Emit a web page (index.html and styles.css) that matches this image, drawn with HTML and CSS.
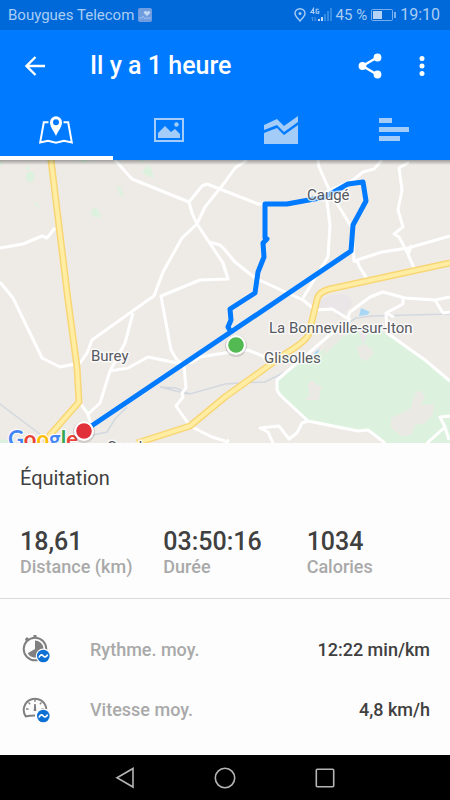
FILE: index.html
```html
<!DOCTYPE html>
<html lang="fr">
<head>
<meta charset="utf-8">
<meta name="viewport" content="width=device-width, initial-scale=1">
<title>Il y a 1 heure</title>
<link rel="stylesheet" href="styles.css">
</head>
<body>
<div class="status">
  <div class="status-side">
    <span>Bouygues Telecom</span>
    <svg class="app-badge" width="14" height="14" viewBox="0 0 14 14" aria-hidden="true">
      <rect width="14" height="14" rx="2" fill="#6f9de0"/>
      <path d="M9 8 6 5.300C5 3.500 7.500 2 9 3.800 10.500 2 13 3.500 12 5.300z" fill="#c0d8f5"/>
      <path d="M1 10h3l1-2 2 3 1-1h5" fill="none" stroke="#9dbdec"/>
    </svg>
  </div>
  <div class="status-side">
    <svg width="12" height="14" viewBox="0 0 12 14" aria-hidden="true">
      <path d="M6 13C3.500 10 1 8 1 5.500a5 4.800 0 0 1 10 0C11 8 8.500 10 6 13z" fill="none" stroke="#a9cdf4" stroke-width="1.400"/>
      <circle cx="6" cy="5.600" r="1.500" fill="#a9cdf4"/>
    </svg>
    <svg width="22" height="16" viewBox="0 0 22 16" aria-hidden="true">
      <path d="M3.500 7V1.500L.8 5.500H4.500M8.800 2.200H6.200v4h2.600V4.500H7.500" fill="none" stroke="#a9cdf4" stroke-width="1.100"/>
      <path d="M2.500 14v-4l-1.500 1.500M5 10v4l1.500-1.500" fill="none" stroke="#4a93e2"/>
      <path d="M8 12h2v2H8zM11 10h2v4h-2z" fill="#c4ddf8"/>
      <path d="M14 7h2v7h-2zM17 4h2v10h-2zM20 1h2v13h-2z" fill="#348be3"/>
    </svg>
    <span class="battery-text">45 %</span>
    <svg width="25" height="12" viewBox="0 0 25 12" aria-hidden="true">
      <rect x=".5" y=".5" width="21" height="11" rx="1" fill="none" stroke="#78b0ee"/>
      <path d="M2 2h9v8H2z" fill="#b4d3f5"/><path d="M23 3h2v6h-2z" fill="#78b0ee"/>
    </svg>
    <span class="clock">19:10</span>
  </div>
</div>

<header class="appbar">
  <button class="icon-button" aria-label="Retour">
    <svg width="20" height="20" viewBox="0 0 20 20"><path d="M20 10H2M10.500 1 1.500 10l9 9" fill="none" stroke="#fff" stroke-width="2.400"/></svg>
  </button>
  <h1>Il y a 1 heure</h1>
  <button class="icon-button" aria-label="Partager">
    <svg width="24" height="26" viewBox="0 0 24 26"><path d="M19 4.500 4.500 13 19 21.500" fill="none" stroke="#fff" stroke-width="2.400"/><g fill="#fff"><circle cx="19.500" cy="4.500" r="3.900"/><circle cx="4.500" cy="13" r="3.900"/><circle cx="19.500" cy="21.500" r="3.900"/></g></svg>
  </button>
  <button class="icon-button menu-button" aria-label="Plus">
    <svg width="6" height="20" viewBox="0 0 6 20" fill="#fff"><circle cx="3" cy="2.500" r="2.500"/><circle cx="3" cy="10" r="2.500"/><circle cx="3" cy="17.500" r="2.500"/></svg>
  </button>
</header>

<nav class="tabs">
  <button class="tab active" aria-label="Carte">
    <svg width="34" height="28" viewBox="0 0 34 28"><path d="M9.500 6.200H4.800L1.200 26.400 9 24.800l8 2 8-2 7.800 1.600L29.200 6.200h-4.700" fill="none" stroke="#fff" stroke-width="2"/><path fill-rule="evenodd" d="M17 20C15 15 11 11 11 6.400a6 6.200 0 0 1 12 0C23 11 19 15 17 20zM17 3.300a3 3 0 1 0 0 6 3 3 0 0 0 0-6z" fill="#fff"/></svg>
  </button>
  <button class="tab" aria-label="Photos">
    <svg width="30" height="24" viewBox="0 0 30 24"><path d="M1 1h28v22H1z" fill="none" stroke="#a3cdf8" stroke-width="2"/><path d="M4 20v-5l7-7 6 6 4-3 5 5v4z" fill="#a3cdf8"/><circle cx="22.500" cy="6.500" r="2.200" fill="#a3cdf8"/></svg>
  </button>
  <button class="tab" aria-label="Graphiques">
    <svg width="34" height="28" viewBox="0 0 34 28" fill="#a3cdf8"><path d="M0 9 13 3l7 7L34 0v6L20 16l-7-7-13 5z"/><path d="m0 17 13-5 7 7L34 9v19H0z"/></svg>
  </button>
  <button class="tab" aria-label="Détails">
    <svg width="30" height="24" viewBox="0 0 30 24" fill="#a3cdf8"><path d="M0 0h13v5H0zM0 9h30v5H0zM0 18h21v5H0z"/></svg>
  </button>
</nav>

<main>
  <section class="map" aria-label="Carte du parcours">
    <svg viewBox="0 160 450 283" preserveAspectRatio="xMidYMid slice">
      <rect x="0" y="160" width="450" height="283" fill="#eeebe7"/>
      <path class="wood" d="M357 331 378 331 387 333 425 360 450 381V443H385L368 431 358 431 308 421 280 395 277 390V380L297 363 320 352 334 340 345 336 349 330z"/>
      <path class="wood" d="m26 174 4-3 4 2v7l-4 3-4-3zM25 168l3-2 2 3-2 1zM34 204l4-1 1 5zM91 210l5-2 3 3 2 7-9-2zM142 172l6-7 3 3 3 10-8-3zM116 185l5 3 3 10-4-3zM77 160h12l-5 3zM0 161l2 1-2 5zM86 406l4 5-3 1zM0 439l8 1 3 3H0zM138 160h6l-2 2z"/>
      <path class="bare" d="m357 346 9-2 8 8-7 9-7-3zM308 384l4-4 4 4 6 3-2 5-1 8h-14l4-4v-5zM391 418l10-5 10-5 2-8 3-8 5-1 4 6-4 8 13-1-1 10-8 9-10 2-4 10-10 1-10-8zM327 339l10-5 6 1-6 8-10 9-4 4z"/>
      <path d="m318 302 12-7 15-1 6 4 1 7-13 13-8-9-16 2z" fill="#eae6e8"/>
      <path d="m358 330 5 14 6-13-5-5z" fill="#e9e5e8"/>
      <path class="lake" d="m361 308 9 4-3 3-8 1zM362 302l6-5-2 4zM315 352l5-3-4 7-4 3z"/>
      <path class="river" d="M0 404 41 435M160 387l16 1 14 6 35-10 15-1 25-1 24-12 8-7 35-30 24-15 16-2 78-2M160 387l28 7M127 407l-12 12-8 13-14 3"/>
      <g class="road">
        <path d="m115 160 17 19 57 23 3 11 5 11 12 18 14 21 2 7"/>
        <path d="m209 242 11 3 5 5 10 12 20 16 48 22 12 10 17-1 18 11"/>
        <path d="m189 202 13-16 5-2 18 7 33 13h7"/>
        <path d="m247 160-12 8-10 14-20 25-8 17-15 14-19 34-9 24-6 4-56 40-5 13-7 10-20 4-18-9-29-60-13-16"/>
        <path d="m0 248 23-4 19-8 5 2 8-10"/>
        <path d="m223 263 5 16-28 1-39 16 2 11 8 43 6 10 7 5 2 23-4 5 1 4-7 9 14 20 22 11 13 4"/>
        <path d="m110 371 18-3 20-11 29 6 16-1 7-5 25-4 23-3 17 7"/>
        <path d="m133 313-8 30-15 28-10 32-12 11-8-11 8 11 3 11"/>
        <path d="m318 160 1 7 9 20 10 18 14 23 2 33 4 1 1 4 10 16"/>
        <path d="m382 160-8 9-11 3-10 8-25 11-1 11 3 23-2 32-5 8-20 33"/>
        <path d="m354 261 28-9 26-4 42-12"/>
        <path d="m409 162-10 6 3 22-4 20 5 17-9 7 5 3 8 15 7 16M412 245l-4 9"/>
        <path d="m348 317 2-5 20-15 13-5 22 6 30 2 15-3M350 320l-2-3 2-5M403 297v7l-17 9 1 20 38 27 25 21M386 313l8 4M435 300l8 13 7-1"/>
        <path d="m350 320-18 13-35 30-20 17v10l3 5 28 26 50 10 10-1 17 13"/>
        <path d="m308 421-6 2-5 10-8 6-10-13-19 2 8 4 5 11M427 443l18-16-5-10 10-1M445 427l4 13M225 443l4-3"/>
      </g>
      <path class="highway-edge" d="m51 160 17 140 9 67 2 35-29 33-4 8"/>
      <path class="highway" d="m51 160 17 140 9 67 2 35-29 33-4 8"/>
      <path class="highway-edge" d="m450 263-120 26q-12 3-13 11l-8 33q-1 7-24 21l-60 43-35 29-53 17"/>
      <path class="highway" d="m450 263-120 26q-12 3-13 11l-8 33q-1 7-24 21l-60 43-35 29-53 17"/>
      <text class="place" x="107" y="452">Gaud</text>
      <text class="google" x="8" y="447"><tspan fill="#4285f4">G</tspan><tspan fill="#ea4335">o</tspan><tspan fill="#fbbc05">o</tspan><tspan fill="#4285f4">g</tspan><tspan fill="#34a853">l</tspan><tspan fill="#ea4335">e</tspan></text>
      <path class="track" d="M84 431 351 251 353 225 366 201 363 182 348 184 325 197 287 204 265 204V238L267 239 263 243 264 257 258 272 255 293 230 309 231 320 228 327 232 334"/>
      <circle class="halo" cx="236" cy="346" r="11"/><circle cx="236" cy="345" r="10" fill="#fff"/><circle cx="236" cy="345" r="7.800" fill="#53b951"/>
      <circle class="halo" cx="84" cy="432" r="11"/><circle cx="84" cy="431" r="10" fill="#fff"/><circle cx="84" cy="431" r="7.800" fill="#e2303a"/>
      <text class="place" x="307" y="200">Caugé</text>
      <text class="place" x="91" y="361">Burey</text>
      <text class="place" x="269" y="333">La Bonneville-sur-Iton</text>
      <text class="place" x="264" y="363">Glisolles</text>
    </svg>
  </section>

  <section class="summary">
    <h2>Équitation</h2>
    <dl class="stats">
      <div><dd>18,61</dd><dt>Distance (km)</dt></div>
      <div><dd>03:50:16</dd><dt>Durée</dt></div>
      <div><dd>1034</dd><dt>Calories</dt></div>
    </dl>
  </section>

  <dl class="details">
    <div class="detail">
      <svg width="30" height="30" viewBox="0 0 30 30" aria-hidden="true">
        <circle cx="13" cy="15" r="11.300" fill="none" stroke="#808080" stroke-width="2"/>
        <path d="M11.500 1h3v3h-3zM3 5l2-2 2 2-3 3z" fill="#808080"/>
        <path d="M13 15V6.500A8.500 8.500 0 1 1 5.600 19.200z" fill="#808080"/>
        <circle cx="21.300" cy="22" r="7.500" fill="#fdfdfd"/><circle cx="21.300" cy="22" r="6.300" fill="#0b6fd3"/>
        <path d="M17 23.500c1.500-3.500 3-3 4.300-1.500s3 1.500 4.300-1.500" fill="none" stroke="#fff" stroke-width="1.700"/>
      </svg>
      <dt>Rythme. moy.</dt><dd>12:22 min/km</dd>
    </div>
    <div class="detail">
      <svg width="30" height="30" viewBox="0 0 30 30" aria-hidden="true">
        <path d="M4 22.800A11.300 11.300 0 1 1 24.300 15M3 22.500q5-1 10-1" fill="none" stroke="#808080" stroke-width="2"/>
        <path d="M13 5v3M4 15h2.500M22 15h-2.500M6.500 8.500l1.700 1.700M19.500 8.500l-1.700 1.700" stroke="#808080" stroke-width="1.300"/>
        <path d="M12.200 10h1.600l.5 7h-2.600z" fill="#808080"/>
        <circle cx="21.300" cy="22" r="7.500" fill="#fdfdfd"/><circle cx="21.300" cy="22" r="6.300" fill="#0b6fd3"/>
        <path d="M17 23.500c1.500-3.500 3-3 4.300-1.500s3 1.500 4.300-1.500" fill="none" stroke="#fff" stroke-width="1.700"/>
      </svg>
      <dt>Vitesse moy.</dt><dd>4,8 km/h</dd>
    </div>
  </dl>
</main>

<nav class="system">
  <button aria-label="Précédent"><svg width="20" height="22" viewBox="0 0 20 22"><path d="M18 1.500v18.500L2 10.800z"/></svg></button>
  <button aria-label="Accueil"><svg width="22" height="22" viewBox="0 0 22 22"><circle cx="11" cy="11" r="9.700"/></svg></button>
  <button aria-label="Récents"><svg width="20" height="20" viewBox="0 0 20 20"><rect x="1.300" y="1.300" width="17.400" height="17.400" rx="1"/></svg></button>
</nav>
</body>
</html>
```
FILE: styles.css
```css
* { box-sizing: border-box; }

body {
  margin: 0;
  min-height: 100vh;
  display: flex;
  flex-direction: column;
  background: #fdfdfd;
  color: #404040;
  font-family: Roboto, "Liberation Sans", sans-serif;
}

h1, h2, dl, dt, dd { margin: 0; }
svg { display: block; flex: none; }
button {
  display: flex;
  align-items: center;
  justify-content: center;
  padding: 0;
  border: 0;
  background: none;
}

.status {
  display: flex;
  justify-content: space-between;
  padding: 0 10px 0 8px;
  background: #0069d9;
  color: #a9cdf4;
  font-size: 15px;
  line-height: 30px;
}
.status-side { display: flex; align-items: center; gap: 4px; }
.clock { font-size: 16px; }

.appbar {
  display: flex;
  align-items: center;
  height: 72px;
  padding: 0 20px 0 15px;
  background: #007aff;
  color: #fff;
}
.appbar h1 {
  flex: 1;
  padding-left: 35px;
  font-size: 25px;
  line-height: 32px;
  font-weight: 500;
}
.icon-button { width: 40px; height: 40px; }
.menu-button { width: 16px; margin-left: 24px; }

.tabs {
  display: grid;
  grid-template-columns: repeat(4, 1fr);
  height: 58px;
  background: #007aff;
}
.tab { border-bottom: 4px solid transparent; padding-top: 2px; }
.tab.active { border-bottom-color: #fff; }

main { flex: 1; display: flex; flex-direction: column; }

.map {
  position: relative;
  flex: 1 0 200px;
}
.map svg {
  position: absolute;
  inset: 0;
  width: 100%;
  height: 100%;
}
.map::after {
  content: "";
  position: absolute;
  inset: 0 0 auto;
  height: 5px;
  background: linear-gradient(#0005, #0000);
}
.wood { fill: #ddf2de; }
.bare { fill: #ebe9e3; }
.lake { fill: #a8d8f5; }
.river { fill: none; stroke: #d3d8df; stroke-width: 1.5px; }
.road { fill: none; stroke: #fff; stroke-width: 3px; stroke-linejoin: round; }
.highway-edge { fill: none; stroke: #f8d675; stroke-width: 7px; stroke-linejoin: round; }
.highway { fill: none; stroke: #ffeda3; stroke-width: 4px; stroke-linejoin: round; }
.track { fill: none; stroke: #007aff; stroke-width: 5px; stroke-linejoin: round; }
.halo { fill: #0002; }
.place {
  fill: #565a61;
  stroke: #fffb;
  stroke-width: 3px;
  stroke-linejoin: round;
  paint-order: stroke;
  font-size: 15px;
}
.google {
  stroke: #fff;
  stroke-width: 2px;
  paint-order: stroke;
  font-family: Lato, sans-serif;
  font-size: 22px;
  font-weight: 700;
}

.summary {
  padding: 20px 0 20px 20px;
  border-bottom: 1px solid #dcdcdc;
}
.summary h2 { font-size: 20px; line-height: 30px; font-weight: 400; }
.stats {
  display: grid;
  grid-template-columns: repeat(3, 1fr);
  padding-top: 35px;
}
.stats div { display: flex; flex-direction: column; }
.stats dd { font-size: 25px; line-height: 28px; font-weight: 500; }
.stats dt { font-size: 18px; line-height: 22px; font-weight: 500; color: #a9a9a9; }

.details { padding: 20px 20px 16px; }
.detail { display: flex; align-items: center; height: 60px; font-size: 18px; font-weight: 500; }
.detail svg { margin: 0 38px 0 2px; }
.detail dt { flex: 1; color: #a9a9a9; }

.system {
  display: flex;
  justify-content: center;
  align-items: center;
  gap: 60px;
  height: 45px;
  background: #000;
}
.system button { width: 40px; height: 40px; }
.system svg { fill: none; stroke: #b5b5b5; stroke-width: 1.6px; }
```
